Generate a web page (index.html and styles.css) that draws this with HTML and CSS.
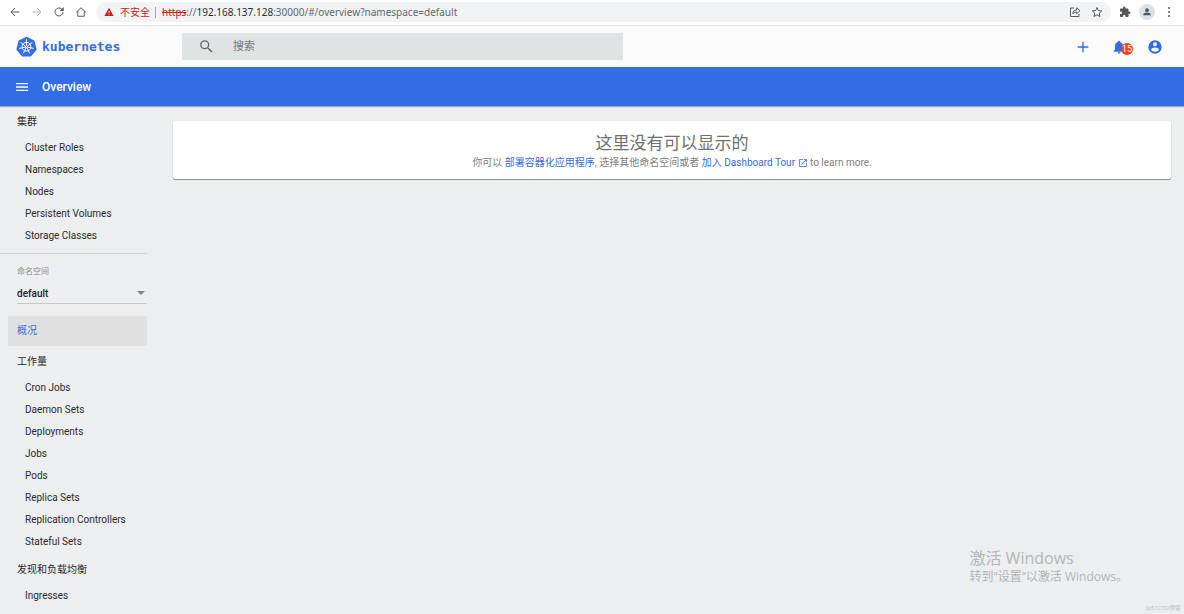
FILE: index.html
```html
<!DOCTYPE html>
<html lang="zh-CN">
<head>
<meta charset="utf-8">
<title>Kubernetes Dashboard</title>
<link rel="stylesheet" href="styles.css">
</head>
<body>
<div class="browser">
  <button class="tool" aria-label="Back"><svg viewBox="0 0 24 24"><path d="M21 12H4M12 4l-8 8 8 8" class="line"/></svg></button>
  <button class="tool tool-off" aria-label="Forward"><svg viewBox="0 0 24 24"><path d="M3 12h17M12 4l8 8-8 8" class="line"/></svg></button>
  <button class="tool" aria-label="Reload"><svg viewBox="0 0 24 24"><path d="M20 12a8 8 0 1 1-2.3-5.7L20 8.500" class="line"/><path d="M21.500 2v8h-8z"/></svg></button>
  <button class="tool" aria-label="Home"><svg viewBox="0 0 24 24"><path d="M2.500 12.500L12 3.500l9.500 9M5.500 10.500V20.500h13V10.500" class="line"/></svg></button>
  <div class="address">
    <svg class="warn" viewBox="0 0 24 24"><path d="M12 2L23 21.500H1z" fill="#c5221f"/><path d="M11 9h2v6h-2zM11 16.500h2v2h-2z" fill="#fff"/></svg>
    <span class="insecure">不安全</span>
    <span class="url"><s class="scheme">https</s>://<b class="host">192.168.137.128</b>:30000/#/overview?namespace=default</span>
    <button class="tool tool-share" aria-label="Share"><svg viewBox="0 0 24 24"><path d="M10 4H3v17h17v-5M7.500 15.500c.5-5 3.500-7.500 8-7.500V3.500l6.500 6-6.500 6v-3.500c-3.500 0-6 1-8 3.500z" class="thin"/></svg></button>
    <button class="tool" aria-label="Bookmark"><svg viewBox="0 0 24 24"><path d="M12 3l2.700 6.200 6.800.6-5.100 4.500 1.500 6.700-5.900-3.500L6.100 21l1.500-6.700-5.100-4.500 6.800-.6z" class="thin"/></svg></button>
  </div>
  <button class="tool" aria-label="Extensions"><svg viewBox="0 0 24 24"><path d="M20.500 11H19V7c0-1.100-.9-2-2-2h-4V3.500a2.500 2.500 0 0 0-5 0V5H4c-1.100 0-2 .9-2 2v3.800h1.500a2.700 2.700 0 0 1 0 5.400H2V20c0 1.100.9 2 2 2h3.800v-1.500a2.700 2.700 0 0 1 5.400 0V22H17c1.100 0 2-.9 2-2v-4h1.500a2.500 2.500 0 0 0 0-5z"/></svg></button>
  <button class="tool profile" aria-label="Profile"><svg viewBox="0 0 24 24"><circle cx="12" cy="7.500" r="4.500"/><path d="M3 20v-2c0-3 5-5 9-5s9 2 9 5v2z"/></svg></button>
  <button class="tool" aria-label="Menu"><svg viewBox="0 0 24 24"><circle cx="12" cy="4" r="2"/><circle cx="12" cy="12" r="2"/><circle cx="12" cy="20" r="2"/></svg></button>
</div>

<header class="header">
  <a class="brand" href="#/overview">
    <svg class="wheel" viewBox="0 0 42 42">
      <path class="badge" d="M21 1.500l14.500 7c1 .5 1.600 1.300 1.900 2.400L41 26c.2 1 0 2-.7 2.900L30.500 40c-.6.700-1.500 1-2.500 1H14c-1 0-1.900-.3-2.500-1L1.700 28.900C1 28 .8 27 1 26l3.600-15.100c.3-1.100.9-1.900 1.900-2.400z"/>
      <g class="spokes"><circle cx="21" cy="21.500" r="8.800"/><circle cx="21" cy="21.500" r="2"/><path d="M21 19V6.500M23 20.300l9.800-7.600M23.400 22.200l12.100 2.700M22 23.500l5.400 11.200M20 23.500l-5.400 11.200M18.600 22.200L6.500 24.900M19 20.300l-9.800-7.600"/></g>
    </svg>
    <span class="brand-name">kubernetes</span>
  </a>
  <label class="search">
    <svg viewBox="0 0 24 24"><path d="M15.500 14h-.79l-.28-.27A6.470 6.470 0 0 0 16 9.500 6.500 6.500 0 1 0 9.500 16c1.610 0 3.090-.59 4.230-1.570l.27.28v.79l5 4.990L20.490 19zm-6 0a4.500 4.500 0 1 1 0-9 4.500 4.500 0 0 1 0 9z"/></svg>
    <input class="search-input" type="text" placeholder="搜索" aria-label="搜索">
  </label>
  <div class="actions">
    <button class="action" aria-label="Create"><svg viewBox="0 0 24 24"><path d="M20 13h-7v7h-2v-7H4v-2h7V4h2v7h7z"/></svg></button>
    <button class="action" aria-label="Notifications"><svg viewBox="0 0 24 24"><path d="M12 22c1.100 0 2-.9 2-2h-4c0 1.100.9 2 2 2zm6-6v-5c0-3.070-1.640-5.640-4.500-6.320V4a1.500 1.500 0 0 0-3 0v.68C7.630 5.360 6 7.920 6 11v5l-2 2v1h16v-1z"/></svg><span class="count">15</span></button>
    <button class="action" aria-label="Account"><svg viewBox="0 0 24 24"><path d="M12 2a10 10 0 1 0 0 20 10 10 0 0 0 0-20zm0 3a3 3 0 1 1 0 6 3 3 0 0 1 0-6zm0 14.200a7.200 7.200 0 0 1-6-3.220c.03-1.990 4-3.080 6-3.080s5.970 1.090 6 3.080a7.200 7.200 0 0 1-6 3.220z"/></svg></button>
  </div>
</header>

<div class="titlebar">
  <button class="burger" aria-label="Toggle navigation"><svg viewBox="0 0 24 24"><path d="M3 18h18v-2H3zm0-5h18v-2H3zm0-7v2h18V6z"/></svg></button>
  <h1 class="title">Overview</h1>
</div>

<div class="layout">
  <nav class="sidebar">
    <a class="group" href="#/cluster">集群</a>
    <div class="items">
      <a class="item" href="#/clusterrole">Cluster Roles</a>
      <a class="item" href="#/namespace">Namespaces</a>
      <a class="item" href="#/node">Nodes</a>
      <a class="item" href="#/persistentvolume">Persistent Volumes</a>
      <a class="item" href="#/storageclass">Storage Classes</a>
    </div>
    <div class="namespace">
      <label class="ns-label" for="ns">命名空间</label>
      <div class="ns-field">
        <select class="ns-select" id="ns"><option>default</option></select>
        <svg class="ns-arrow" viewBox="0 0 10 5"><path d="M1 0h8L5 4z"/></svg>
      </div>
    </div>
    <a class="current" href="#/overview">概况</a>
    <a class="group" href="#/workloads">工作量</a>
    <div class="items">
      <a class="item" href="#/cronjob">Cron Jobs</a>
      <a class="item" href="#/daemonset">Daemon Sets</a>
      <a class="item" href="#/deployment">Deployments</a>
      <a class="item" href="#/job">Jobs</a>
      <a class="item" href="#/pod">Pods</a>
      <a class="item" href="#/replicaset">Replica Sets</a>
      <a class="item" href="#/replicationcontroller">Replication Controllers</a>
      <a class="item" href="#/statefulset">Stateful Sets</a>
    </div>
    <a class="group" href="#/discovery">发现和负载均衡</a>
    <div class="items">
      <a class="item" href="#/ingress">Ingresses</a>
    </div>
  </nav>
  <main class="content">
    <section class="card">
      <h2 class="card-title">这里没有可以显示的</h2>
      <p class="card-text">你可以 <a href="#/create">部署容器化应用程序</a>, 选择其他命名空间或者 <a href="#/tour">加入 Dashboard Tour <svg class="external" viewBox="0 0 24 24"><path d="M19 19H5V5h7V3H3v18h18v-9h-2zM14 3v2h3.590l-9.830 9.830 1.410 1.410L19 6.410V10h2V3z"/></svg></a> to learn more.</p>
    </section>
  </main>
</div>

<aside class="activate">
  <p class="activate-title">激活 Windows</p>
  <p class="activate-text">转到“设置”以激活 Windows。</p>
</aside>
<div class="credit">@51CTO博客</div>
</body>
</html>
```
FILE: styles.css
```css
* { box-sizing: border-box; }

body {
  margin: 0;
  height: 100vh;
  overflow: hidden;
  display: flex;
  flex-direction: column;
  background: #edeef0;
  color: #2b2b2b;
  font: 10px/16px Roboto, "Noto Sans CJK SC", sans-serif;
}

h1, h2, p { margin: 0; font-weight: 400; }
a { color: #326de6; text-decoration: none; }
svg { display: block; fill: currentColor; flex: none; }
button { border: 0; padding: 0; background: none; color: inherit; font: inherit; }

.browser {
  flex: none;
  display: flex;
  align-items: center;
  gap: 6px;
  height: 26px;
  padding: 0 7px 1px;
  background: #fff;
  border-bottom: 1px solid #dfe1e3;
  color: #55585c;
}
.tool { flex: none; display: grid; place-items: center; width: 16px; height: 16px; }
.tool svg { width: 12px; height: 12px; }
.tool-off { color: #b4b6b9; }
.tool-share { margin-left: auto; }
.line { fill: none; stroke: currentColor; stroke-width: 2; }
.thin { fill: none; stroke: currentColor; stroke-width: 2; stroke-linejoin: round; }
.profile { border-radius: 50%; background: #dde1e8; }
.profile svg { width: 10px; height: 10px; }

.address {
  flex: 1;
  display: flex;
  align-items: center;
  gap: 6px;
  height: 20px;
  margin-left: 1px;
  padding: 0 6px 0 8px;
  border-radius: 10px;
  background: #f1f3f4;
  font: 10px/16px "Noto Sans", "Noto Sans CJK SC", sans-serif;
}
.warn { width: 10px; height: 10px; }
.insecure { padding-right: 5px; border-right: 1px solid #a5a8ab; color: #c5221f; line-height: 11px; }
.url { color: #63676b; }
.scheme { color: #c5221f; }
.host { color: #2b2d30; font-weight: 400; }

.header {
  flex: none;
  display: flex;
  align-items: center;
  height: 41px;
  padding: 0 21px 0 16px;
  background: #fafafa;
}
.brand { display: flex; align-items: center; gap: 5px; width: 166px; }
.wheel { width: 21px; height: 21px; }
.badge { fill: #326de6; }
.spokes { fill: none; stroke: #fff; stroke-width: 2; }
.brand-name { font: bold 13px/16px "DejaVu Sans Mono", monospace; }
.search {
  display: flex;
  align-items: center;
  gap: 18px;
  width: 441px;
  min-width: 120px;
  height: 27px;
  padding: 0 16px;
  border-radius: 1px;
  background: #dfe3e4;
  color: #666;
}
.search svg { width: 17px; height: 17px; }
.search-input {
  flex: 1;
  min-width: 0;
  border: 0;
  padding: 0;
  background: none;
  color: #555;
  font: 11px/16px Roboto, "Noto Sans CJK SC", sans-serif;
}
.search-input::placeholder { color: #777; }
.actions { display: flex; gap: 20px; margin-left: auto; color: #326de6; }
.action { position: relative; width: 16px; height: 16px; }
.action svg { width: 16px; height: 16px; }
.count {
  position: absolute;
  left: 10px;
  top: 4px;
  width: 12px;
  height: 12px;
  border-radius: 50%;
  background: #fb4014;
  color: #fff;
  font-size: 9px;
  line-height: 12px;
}

.titlebar {
  flex: none;
  display: flex;
  align-items: center;
  gap: 12px;
  height: 39px;
  padding: 1px 14px 0;
  background: #326de6;
  box-shadow: 0 1px 1px rgba(0, 0, 0, .3);
  color: #fff;
}
.burger svg { width: 16px; height: 16px; }
.title { font-size: 12px; line-height: 18px; font-weight: 500; }

.layout { flex: 1; min-height: 0; display: flex; }
.sidebar { flex: none; width: 147px; padding-top: 5px; }
.group, .item { display: block; color: #2b2b2b; }
.group { padding: 3px 0 3px 17px; }
.items { padding: 4px 0 6px; }
.item { padding: 3px 0 3px 25px; }
.namespace { padding: 10px 0 0 17px; border-top: 1px solid #d2d3d5; }
.ns-label { display: block; color: #8a8a8a; font-size: 8px; }
.ns-field { display: grid; align-items: center; height: 24px; border-bottom: 1px solid #c6c7c9; }
.ns-select {
  grid-area: 1 / 1;
  appearance: none;
  margin: 4px 0 0;
  border: 0;
  padding: 0;
  background: none;
  color: #222;
  font: 500 10px/16px Roboto, sans-serif;
}
.ns-arrow {
  grid-area: 1 / 1;
  justify-self: end;
  margin: 4px 1px 0 0;
  width: 10px;
  height: 5px;
  color: #808080;
  pointer-events: none;
}
.current {
  display: block;
  margin: 12px 0 5px 8px;
  padding: 7px 9px;
  border-radius: 1px;
  background: #e0e0e0;
}

.content { flex: 1; min-width: 0; padding: 15px 13px 0 26px; }
.card {
  padding: 12px 16px 7px;
  border-radius: 2px;
  background: #fff;
  box-shadow: 0 1px 1px rgba(0, 0, 0, .4), 0 0 1px rgba(0, 0, 0, .2);
  color: #808080;
  text-align: center;
}
.card-title { color: #707070; font-size: 17px; line-height: 21px; }
.card-text { line-height: 18px; }
.external { display: inline-block; width: 10px; height: 10px; vertical-align: -2px; }

.activate {
  position: absolute;
  right: 56px;
  bottom: 28px;
  color: #b4b6b6;
  font-family: "Open Sans", "Noto Sans CJK SC", sans-serif;
}
.activate-title { font-size: 16px; line-height: 20px; }
.activate-text { font-size: 12px; line-height: 18px; }
.credit { position: absolute; right: 3px; bottom: 2px; color: #c0c2c4; font-size: 6px; line-height: 8px; }
```
